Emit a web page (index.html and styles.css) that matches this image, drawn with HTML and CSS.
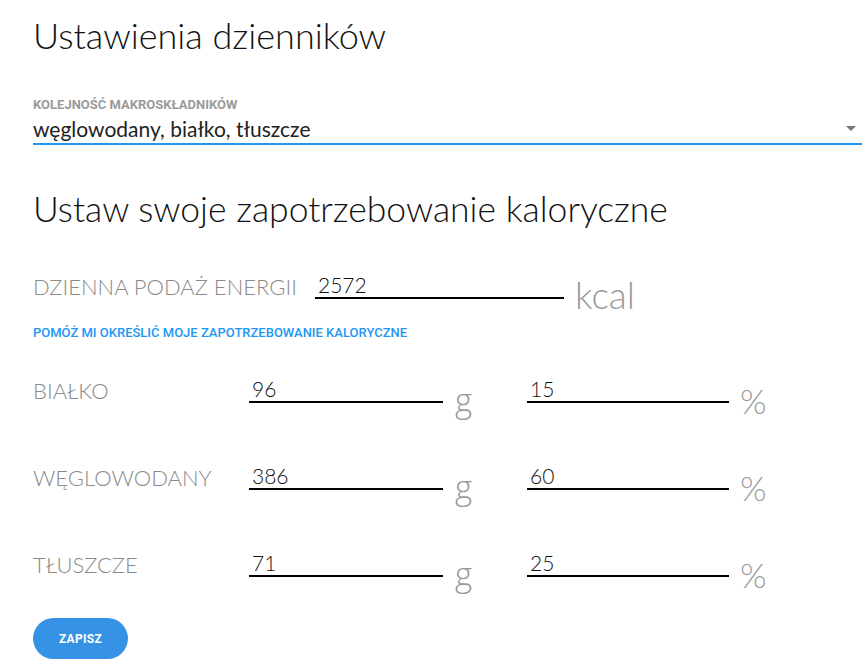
FILE: index.html
```html
<!DOCTYPE html>
<html lang="pl">
<head>
<meta charset="utf-8">
<link rel="stylesheet" href="styles.css">
</head>
<body>
<div class="page">
  <h1 class="title">Ustawienia dzienników</h1>

  <div class="select-field">
    <div class="select-label">KOLEJNOŚĆ MAKROSKŁADNIKÓW</div>
    <div class="select-box">
      <span class="select-value">węglowodany, białko, tłuszcze</span>
      <span class="select-arrow"></span>
    </div>
  </div>

  <h2 class="subtitle">Ustaw swoje zapotrzebowanie kaloryczne</h2>

  <div class="energy-row">
    <div class="energy-label">DZIENNA PODAŻ ENERGII</div>
    <div class="input input-energy">2572</div>
    <div class="unit unit-kcal">kcal</div>
  </div>

  <a class="help-link">POMÓŻ MI OKREŚLIĆ MOJE ZAPOTRZEBOWANIE KALORYCZNE</a>

  <div class="macro-row">
    <div class="macro-label">BIAŁKO</div>
    <div class="input input-g">96</div>
    <div class="unit unit-g">g</div>
    <div class="input input-pct">15</div>
    <div class="unit unit-pct">%</div>
  </div>
  <div class="macro-row">
    <div class="macro-label">WĘGLOWODANY</div>
    <div class="input input-g">386</div>
    <div class="unit unit-g">g</div>
    <div class="input input-pct">60</div>
    <div class="unit unit-pct">%</div>
  </div>
  <div class="macro-row">
    <div class="macro-label">TŁUSZCZE</div>
    <div class="input input-g">71</div>
    <div class="unit unit-g">g</div>
    <div class="input input-pct">25</div>
    <div class="unit unit-pct">%</div>
  </div>

  <button class="save-btn">ZAPISZ</button>
</div>
</body>
</html>
```

FILE: styles.css
```css
* { box-sizing: border-box; }
body {
  margin: 0;
  background: #fff;
  font-family: Lato, "Open Sans", sans-serif;
  color: #000;
}
.page {
  padding: 14px 6px 0 33px;
}
.title {
  margin: 0;
  font-weight: 300;
  font-size: 36px;
  line-height: 42px;
  color: #111;
}
.select-field {
  margin-top: 41px;
}
.select-label {
  font-family: Roboto, sans-serif;
  font-weight: 700;
  font-size: 13px;
  line-height: 16px;
  color: #9a9a9a;
}
.select-box {
  display: flex;
  align-items: center;
  justify-content: space-between;
  border-bottom: 2px solid #2196f3;
  height: 32px;
}
.select-value {
  font-size: 21px;
  font-weight: 400;
  color: #222;
}
.select-arrow {
  width: 0;
  height: 0;
  border-left: 5px solid transparent;
  border-right: 5px solid transparent;
  border-top: 5px solid #777;
  margin-right: 6px;
}
.subtitle {
  margin: 43px 0 0;
  font-weight: 300;
  font-size: 35.5px;
  line-height: 42px;
  color: #111;
}
.energy-row {
  display: flex;
  align-items: flex-start;
  margin-top: 43px;
}
.energy-label {
  width: 282px;
  font-weight: 300;
  font-size: 22px;
  line-height: 28px;
  color: #8a8a8a;
}
.input {
  font-size: 21px;
  font-weight: 300;
  line-height: 24px;
  color: #111;
  padding-left: 3px;
  border-bottom: 2px solid #000;
  height: 26px;
}
.input-energy {
  width: 249px;
}
.unit {
  font-weight: 300;
  color: #9a9a9a;
}
.unit-kcal {
  font-size: 37px;
  line-height: 40px;
  margin-left: 11px;
  margin-top: 2px;
}
.help-link {
  display: block;
  margin-top: 10px;
  font-family: Roboto, sans-serif;
  font-weight: 500;
  font-size: 13px;
  line-height: 15px;
  color: #2196f3;
}
.macro-row {
  display: flex;
  align-items: flex-start;
  height: 87px;
}
.help-link + .macro-row {
  margin-top: 37px;
}
.macro-label {
  width: 216px;
  font-weight: 300;
  font-size: 22px;
  line-height: 28px;
  color: #8a8a8a;
}
.input-g {
  width: 194px;
}
.unit-g {
  width: 84px;
  padding-left: 12px;
  font-family: "Open Sans", Lato, sans-serif;
  font-size: 33px;
  line-height: 40px;
  margin-top: 3px;
}
.input-pct {
  width: 202px;
}
.unit-pct {
  margin-left: 11px;
  font-size: 34px;
  line-height: 40px;
  margin-top: 4px;
}
.save-btn {
  display: block;
  margin-top: -20px;
  width: 95px;
  height: 41px;
  border: none;
  border-radius: 21px;
  background: #3592e4;
  color: #fff;
  font-family: Roboto, sans-serif;
  font-weight: 700;
  font-size: 12px;
  letter-spacing: 0.3px;
}
```
